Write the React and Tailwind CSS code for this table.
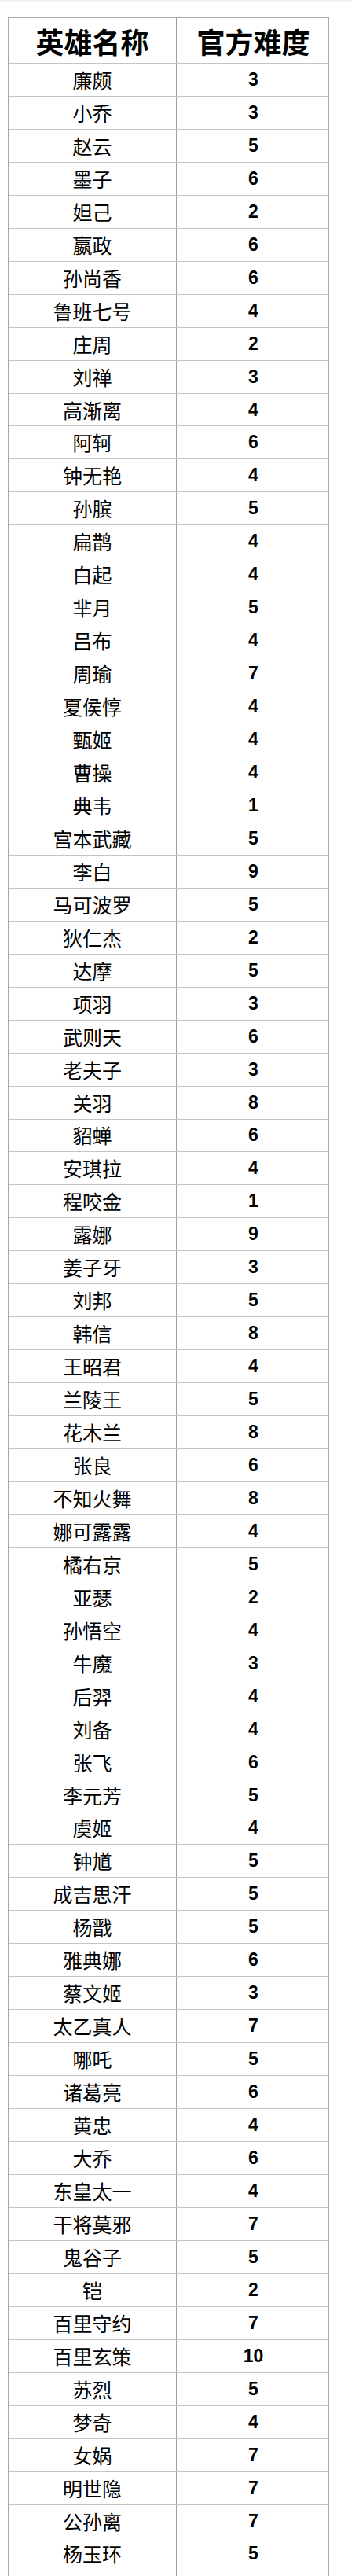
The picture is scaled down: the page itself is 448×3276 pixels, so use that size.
const heroes = [
  ["廉颇", 3], ["小乔", 3], ["赵云", 5], ["墨子", 6], ["妲己", 2], ["嬴政", 6],
  ["孙尚香", 6], ["鲁班七号", 4], ["庄周", 2], ["刘禅", 3], ["高渐离", 4], ["阿轲", 6],
  ["钟无艳", 4], ["孙膑", 5], ["扁鹊", 4], ["白起", 4], ["芈月", 5], ["吕布", 4],
  ["周瑜", 7], ["夏侯惇", 4], ["甄姬", 4], ["曹操", 4], ["典韦", 1], ["宫本武藏", 5],
  ["李白", 9], ["马可波罗", 5], ["狄仁杰", 2], ["达摩", 5], ["项羽", 3], ["武则天", 6],
  ["老夫子", 3], ["关羽", 8], ["貂蝉", 6], ["安琪拉", 4], ["程咬金", 1], ["露娜", 9],
  ["姜子牙", 3], ["刘邦", 5], ["韩信", 8], ["王昭君", 4], ["兰陵王", 5], ["花木兰", 8],
  ["张良", 6], ["不知火舞", 8], ["娜可露露", 4], ["橘右京", 5], ["亚瑟", 2], ["孙悟空", 4],
  ["牛魔", 3], ["后羿", 4], ["刘备", 4], ["张飞", 6], ["李元芳", 5], ["虞姬", 4],
  ["钟馗", 5], ["成吉思汗", 5], ["杨戬", 5], ["雅典娜", 6], ["蔡文姬", 3], ["太乙真人", 7],
  ["哪吒", 5], ["诸葛亮", 6], ["黄忠", 4], ["大乔", 6], ["东皇太一", 4], ["干将莫邪", 7],
  ["鬼谷子", 5], ["铠", 2], ["百里守约", 7], ["百里玄策", 10], ["苏烈", 5], ["梦奇", 4],
  ["女娲", 7], ["明世隐", 7], ["公孙离", 7], ["杨玉环", 5], ["司马懿", 7],
];

const cjk = { fontFamily: '"Noto Sans CJK SC", "Noto Sans", sans-serif' };
const num = { fontFamily: '"Liberation Sans", Arial, sans-serif' };

function Row({ name, level }) {
  return (
    <div className="grid grid-cols-[214px_1fr] h-[41.96px] border-t border-[#c4c4c4]">
      <div
        className="flex items-center justify-center border-r border-[#9e9e9e] text-[25px] text-black leading-none"
        style={cjk}
      >
        {name}
      </div>
      <div
        className="flex items-center justify-center text-[23px] font-bold text-black leading-none pl-[2px]"
        style={num}
      >
        {level}
      </div>
    </div>
  );
}

export default function App() {
  return (
    <div className="w-[448px] h-[3276px] overflow-hidden bg-white">
      <div className="h-[2px] bg-[#f2f2f2]" />
      <div className="pt-[20px] pl-[10px]">
        <div className="w-[409px] border-l border-r border-t border-[#a8a8a8]">
          <div className="grid grid-cols-[214px_1fr] h-[57px]">
            <div
              className="flex items-center justify-center border-r border-[#9e9e9e] text-[36px] font-bold text-black leading-none pt-[1px]"
              style={cjk}
            >
              英雄名称
            </div>
            <div
              className="flex items-center justify-center text-[36px] font-bold text-black leading-none pt-[1px] pl-[2px]"
              style={cjk}
            >
              官方难度
            </div>
          </div>
          {heroes.map(([name, level]) => (
            <Row key={name} name={name} level={level} />
          ))}
        </div>
      </div>
    </div>
  );
}
